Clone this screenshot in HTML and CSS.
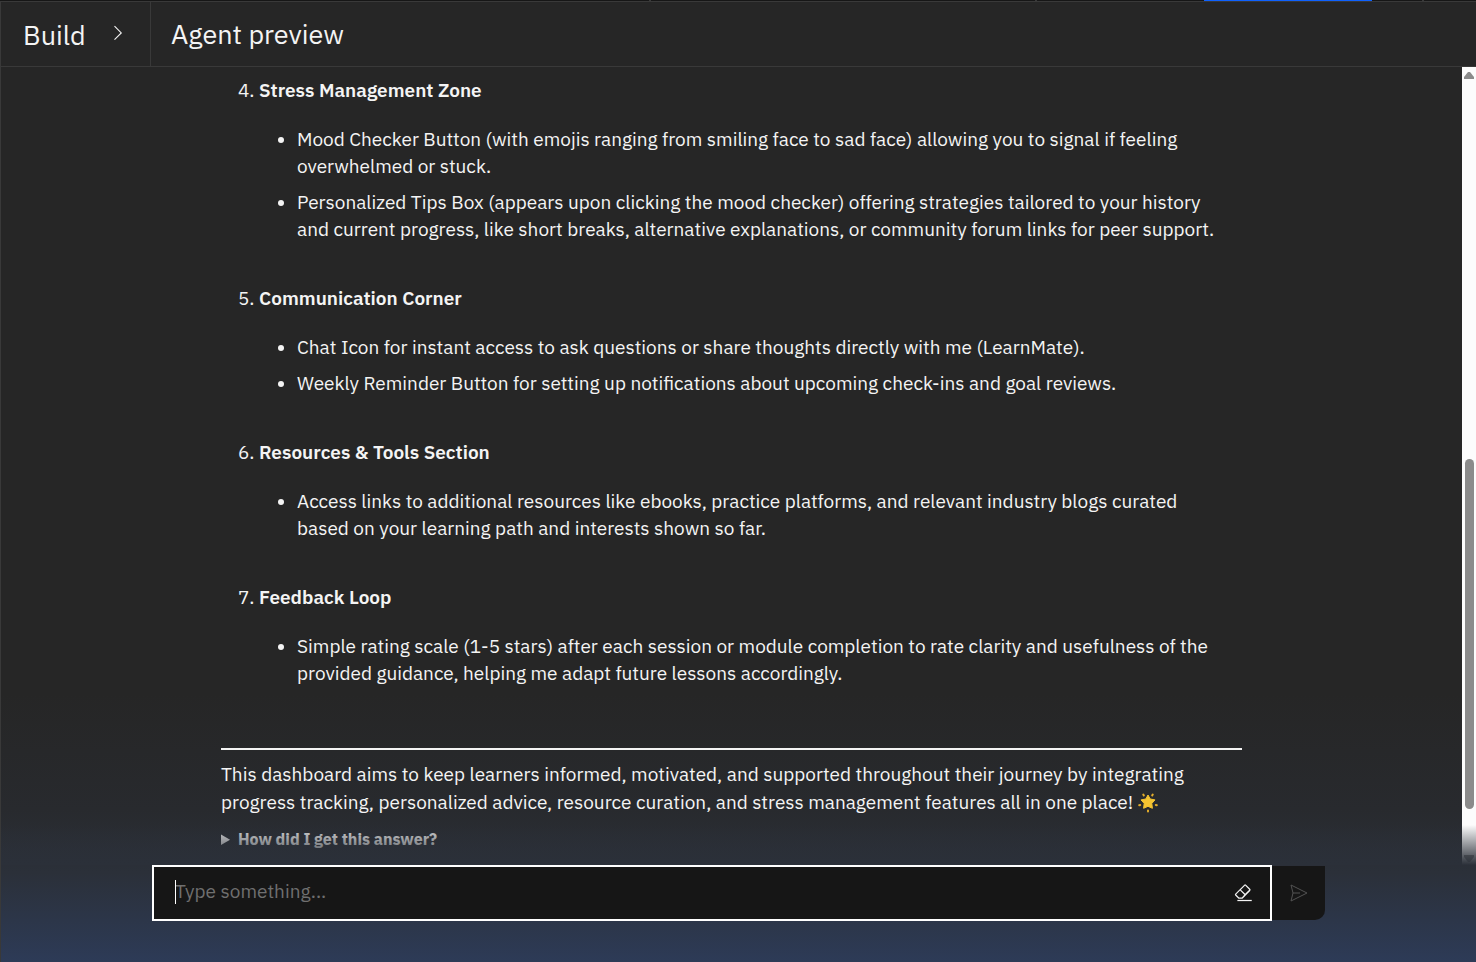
FILE: index.html
```html
<!DOCTYPE html>
<html lang="en">
<head>
<meta charset="utf-8">
<title>Agent preview</title>
<link rel="stylesheet" href="styles.css">
</head>
<body>
<div class="tab-strip"><span class="tab-end tab-first"></span><span class="tab-end tab-second"></span><span class="tab-active"></span><span class="tab-end tab-last"></span></div>
<header class="topbar">
  <button class="build" type="button">Build
    <svg class="chevron" viewBox="0 0 16 16" aria-hidden="true"><path d="M4 1l6 6-6 6"/></svg>
  </button>
  <h1 class="title">Agent preview</h1>
</header>
<main class="preview">
  <div class="messages">
    <article class="answer">
      <ol class="sections" start="4">
        <li><strong>Stress Management Zone</strong>
          <ul>
            <li>Mood Checker Button (with emojis ranging from smiling face to sad face) allowing you to signal if feeling overwhelmed or stuck.</li>
            <li>Personalized Tips Box (appears upon clicking the mood checker) offering strategies tailored to your history and current progress, like short breaks, alternative explanations, or community forum links for peer support.</li>
          </ul>
        </li>
        <li><strong>Communication Corner</strong>
          <ul>
            <li>Chat Icon for instant access to ask questions or share thoughts directly with me (LearnMate).</li>
            <li>Weekly Reminder Button for setting up notifications about upcoming check-ins and goal reviews.</li>
          </ul>
        </li>
        <li><strong>Resources &amp; Tools Section</strong>
          <ul>
            <li>Access links to additional resources like ebooks, practice platforms, and relevant industry blogs curated based on your learning path and interests shown so far.</li>
          </ul>
        </li>
        <li><strong>Feedback Loop</strong>
          <ul>
            <li>Simple rating scale (1-5 stars) after each session or module completion to rate clarity and usefulness of the provided guidance, helping me adapt future lessons accordingly.</li>
          </ul>
        </li>
      </ol>
      <hr class="rule">
      <p class="closing">This dashboard aims to keep learners informed, motivated, and supported throughout their journey by integrating progress tracking, personalized advice, resource curation, and stress management features all in one place! <svg class="star" viewBox="0 0 20 20" role="img" aria-label="glowing star"><path class="star-body" d="M10 2l2.200 4 4.800.900-3.200 3.500.6 4.900-4.400-2-4.400 2 .6-4.900L3 6.900 7.800 6z"/><path class="star-rays" d="M5.300 1.600l.5.900M14.700 1.600l-.5.900M1.200 12.300l1-.3M18.800 12.300l-1-.3M10 17.500v1"/></svg></p>
      <details class="reasoning"><summary>How did I get this answer?</summary></details>
    </article>
    <div class="scrollbar" aria-hidden="true">
      <svg class="arrow" viewBox="0 0 10 8"><path d="M4 1h2l4 5v2H0V6z"/></svg>
      <div class="track"><div class="thumb"></div></div>
      <svg class="arrow" viewBox="0 0 10 8"><path d="M4 7h2l4-5V0H0v2z"/></svg>
    </div>
    <div class="fade"></div>
  </div>
  <form class="composer">
    <div class="field">
      <input class="prompt" type="text" placeholder="Type something..." aria-label="Message">
      <button class="icon-button" type="button" aria-label="Clear chat">
        <svg class="eraser" viewBox="0 0 32 32" aria-hidden="true"><path d="M7 27h23v2H7z"/><path d="M27.4 9.2l-6.6-6.6a2 2 0 0 0-2.8 0L3.6 17a2 2 0 0 0 0 2.8L8.8 25h6.4L27.4 12.700a2.500 2.500 0 0 0 0-3.500zM14.200 23H9.700l-4.700-4.600 6.300-6.300 6.700 6.600zm5.200-5.700l-6.700-6.600L19.400 4l6.600 6.600z"/></svg>
      </button>
    </div>
    <button class="send" type="submit" aria-label="Send" disabled>
      <svg class="plane" viewBox="0 0 20 20" aria-hidden="true"><path d="M2 2l16 8-16 8 2-8zM4 10h7"/></svg>
    </button>
  </form>
</main>
</body>
</html>
```
FILE: styles.css
```css
* { box-sizing: border-box; }
body {
  margin: 0;
  min-height: 100vh;
  display: flex;
  flex-direction: column;
  background: #262626;
  color: #f4f4f4;
  font-family: "IBM Plex Sans", "Noto Sans", sans-serif;
  font-size: 19px;
  line-height: 27px;
}
button, input { font: inherit; color: inherit; border: 0; background: none; padding: 0; }
strong { font-weight: 600; }
.tab-strip { display: flex; height: 1px; background: #161616; }
.tab-end { width: 2px; background: #393939; }
.tab-first { margin-left: 44%; }
.tab-second { margin-left: 26%; }
.tab-active { width: 168px; margin-left: auto; background: #0f62fe; }
.tab-last { margin-left: 50px; margin-right: 52px; }
.topbar { display: flex; height: 66px; border: 1px solid #393939; border-right: 0; }
.build {
  display: flex;
  align-items: center;
  gap: 24px;
  width: 150px;
  padding-left: 22px;
  border-right: 1px solid #393939;
  font-size: 27px;
}
.chevron { width: 18px; height: 18px; fill: none; stroke: #f4f4f4; stroke-width: 1; }
.title { margin: 0; padding-left: 20px; font-size: 27px; font-weight: 400; line-height: 64px; }
.preview {
  flex: 1;
  display: flex;
  flex-direction: column;
  border-left: 1px solid #393939;
  background: linear-gradient(#262626 0, #262626 70%, #282a2e 83%, #2b3039 90%, #2d3b57 100%);
}
.messages { position: relative; display: flex; flex: 1; }
.answer { width: 1021px; max-width: 80%; margin: 0 auto; padding-top: 10px; }
ol, ul { margin: 0; padding-left: 38px; }
.sections > li { margin-bottom: 42px; }
.sections ul {
  padding-top: 22px;
  padding-right: 20px;
  display: flex;
  flex-direction: column;
  gap: 9px;
  list-style: disc;
}
.rule { width: 100%; height: 2px; margin: 61px 0 10px; border: 0; background: #f4f4f4; }
.closing { margin: 0 0 11px; line-height: 28px; }
.star { width: 20px; height: 20px; vertical-align: -4px; }
.star-body { fill: #f5c431; stroke: #f5c431; stroke-width: 1; stroke-linejoin: round; }
.star-rays { stroke: #e3ad2b; stroke-width: 2; stroke-linecap: round; }
.reasoning { color: #e0e0e0; font-size: 16px; font-weight: 700; line-height: 24px; }
.scrollbar {
  display: flex;
  flex-direction: column;
  align-items: center;
  width: 14px;
  padding: 4px 0 2px;
  background: #fcfcfc;
}
.arrow { width: 10px; height: 8px; fill: #8b8b8b; }
.track { flex: 1; display: flex; flex-direction: column; justify-content: flex-end; padding-bottom: 46px; }
.thumb { width: 9px; height: 48%; margin-left: 1px; border-radius: 5px; background: #8b8b8b; }
.fade {
  position: absolute;
  left: 0;
  right: 0;
  bottom: 0;
  height: 40px;
  background: linear-gradient(#2b303900, #2b3039);
  pointer-events: none;
}
.composer { display: flex; width: 80%; max-width: 1173px; margin: 0 auto 41px; }
.field {
  position: relative;
  flex: 1;
  display: flex;
  align-items: center;
  height: 56px;
  padding: 0 17px 0 21px;
  border: 2px solid #ffffff;
  background: #161616;
}
.field::before { content: ""; position: absolute; left: 21px; top: 13px; width: 1px; height: 24px; background: #ffffff; }
.prompt { flex: 1; min-width: 0; padding-bottom: 3px; outline: 0; }
.prompt::placeholder { color: #6f6f6f; opacity: 1; }
.icon-button, .send { display: grid; place-items: center; }
.eraser { width: 20px; height: 20px; fill: #f4f4f4; }
.send { width: 53px; height: 54px; margin-top: 1px; border-radius: 0 0 10px 0; background: #161616; }
.plane { width: 20px; height: 20px; fill: none; stroke: #525252; stroke-width: 1; }
```
